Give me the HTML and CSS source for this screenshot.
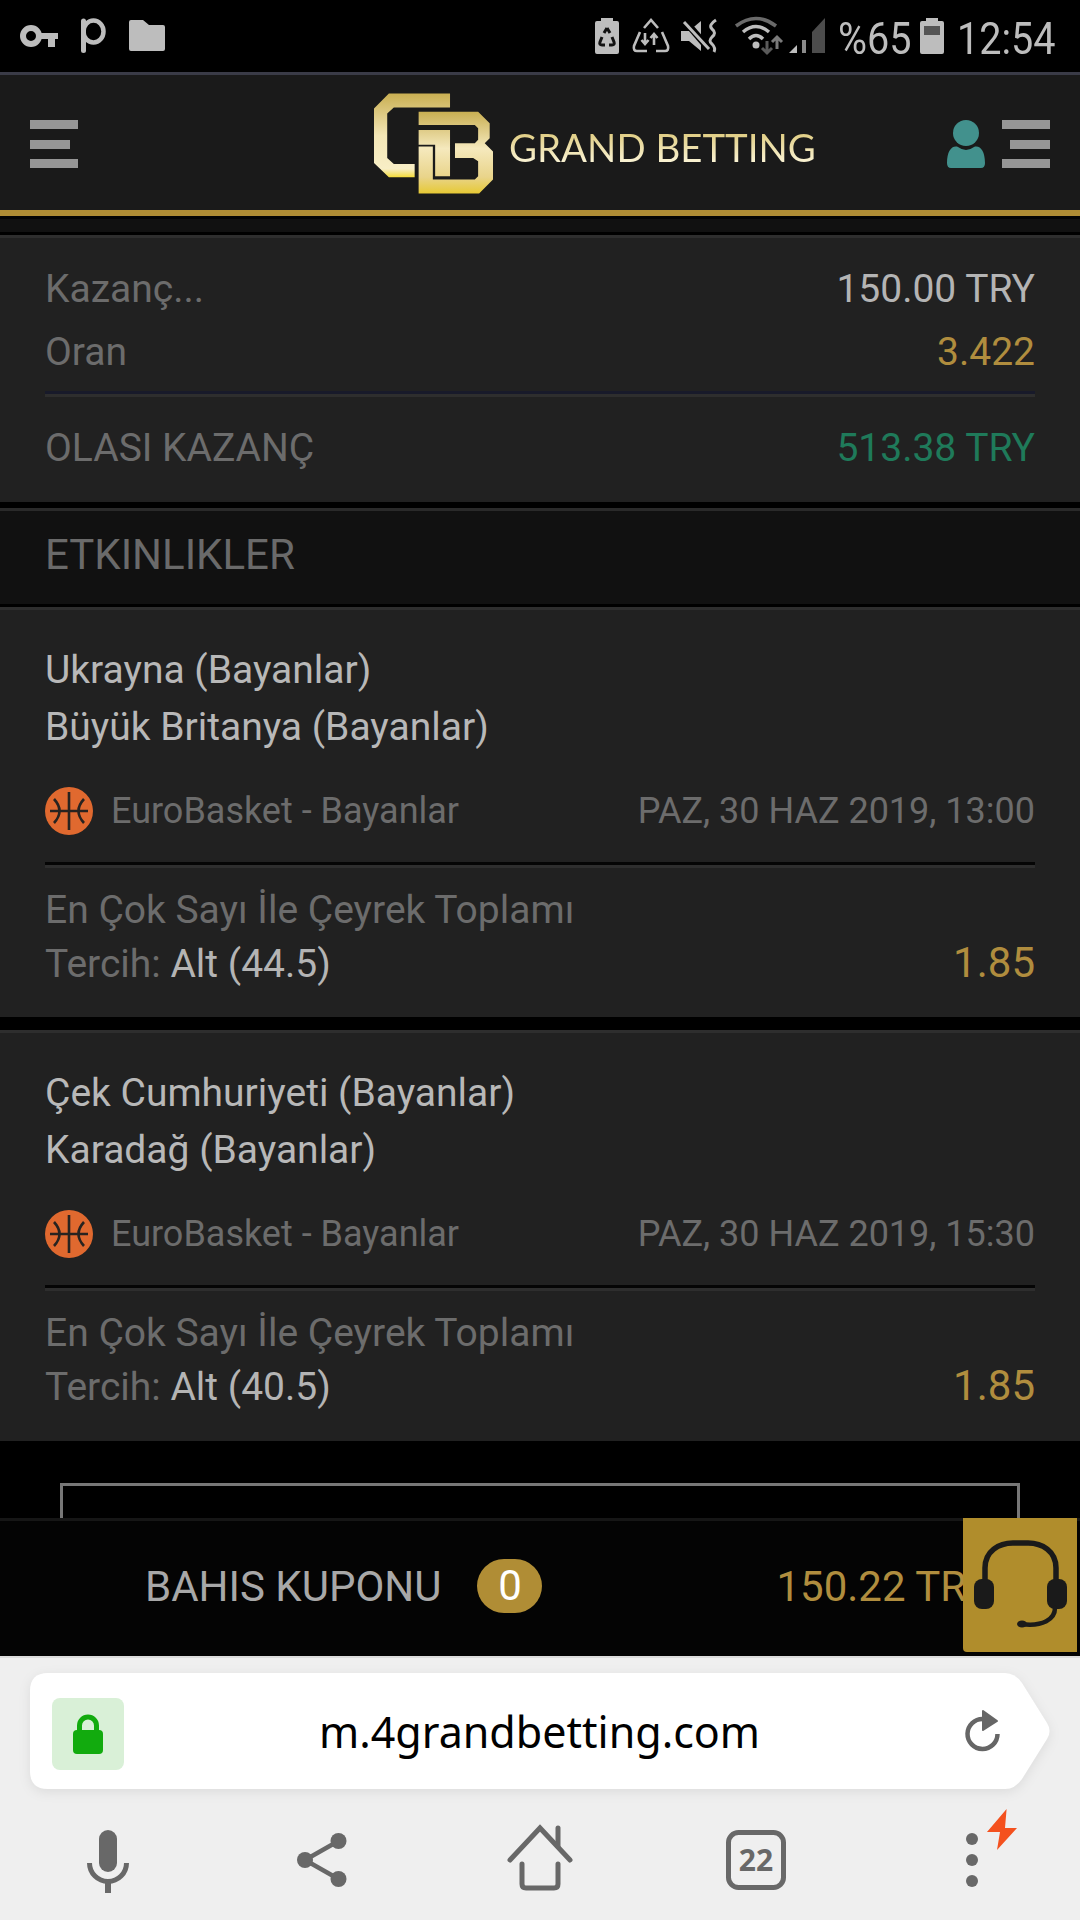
FILE: index.html
```html
<!DOCTYPE html>
<html lang="tr">
<head>
    <meta charset="UTF-8">
    <meta name="viewport" content="width=device-width, initial-scale=1.0">
    <title>Grand Betting</title>
    <link rel="stylesheet" href="styles.css">
</head>
<body>

    <!-- Phone status bar -->
    <div class="status-bar">
        <div class="status-group">
            <svg class="ic-key" viewBox="0 0 38 22"><circle cx="11" cy="11" r="8" fill="none" stroke="#bdbdbd" stroke-width="6"/><path d="M18 8H38V14H35V22H28V14H18Z" fill="#bdbdbd"/></svg>
            <svg class="ic-p" viewBox="0 0 26 35"><path d="M3.5 3V32.5" stroke="#bdbdbd" stroke-width="5" stroke-linecap="round" fill="none"/><ellipse cx="13.5" cy="13.5" rx="10" ry="11" fill="none" stroke="#bdbdbd" stroke-width="4.5"/></svg>
            <svg class="ic-folder" viewBox="0 0 36 31"><path d="M0 2Q0 0 2 0H14L20 5H34Q36 5 36 7V29Q36 31 34 31H2Q0 31 0 29Z" fill="#bdbdbd"/></svg>
        </div>
        <div class="status-group">
            <svg class="ic-batsave" viewBox="0 0 24 36"><path d="M6 0H18V3H22Q24 3 24 5V34Q24 36 22 36H2Q0 36 0 34V5Q0 3 2 3H6Z" fill="#bdbdbd"/><path d="M12 10L9 15M12 10L15 15M7 19L5 24Q4 27 7 27H10M17 19L19 24Q20 27 17 27H14" fill="none" stroke="#111" stroke-width="3"/></svg>
            <svg class="ic-recycle" viewBox="0 0 38 34" fill="none" stroke="#bdbdbd" stroke-width="2.6"><path d="M12 9L19 1L26 9"/><path d="M30 13L36 27Q37 32 33 32H24"/><path d="M8 13L2 27Q1 32 5 32H15"/><path d="M13 14V25M9.5 21L13 25L16.5 21"/><path d="M22 26V15M18.5 19L22 15L25.5 19"/></svg>
            <svg class="ic-mute" viewBox="0 0 38 34"><path d="M0 12H8L20 2V32L8 22H0Z" fill="#bdbdbd"/><path d="M3 1L28 30" stroke="#000" stroke-width="7"/><path d="M3 3L28 30" stroke="#bdbdbd" stroke-width="3"/><path d="M35 1Q27 6 31 10Q36 14 31 18Q27 22 31 25Q35 29 33 33" fill="none" stroke="#bdbdbd" stroke-width="3"/></svg>
            <svg class="ic-wifi" viewBox="0 0 48 38" fill="none"><path d="M1 9Q21 -6 41 9" stroke="#6a6a6a" stroke-width="3.5"/><path d="M8 15Q21 4 34 15" stroke="#bdbdbd" stroke-width="3.5"/><path d="M14 22Q21 15 28 22" stroke="#bdbdbd" stroke-width="3.5"/><circle cx="21" cy="28" r="3.5" fill="#bdbdbd"/><path d="M32 24V36M27 31L32 36L37 31" stroke="#5a5a5a" stroke-width="3"/><path d="M42 32V20M37 25L42 20L47 25" stroke="#7a7a7a" stroke-width="3"/></svg>
            <svg class="ic-signal" viewBox="0 0 36 36"><path d="M0 36L8 28V36Z" fill="#bdbdbd"/><path d="M13 23H17V36H13Z" fill="#8a8a8a"/><path d="M23 15L36 1V36H23Z" fill="#4c4c4c"/></svg>
            <span class="status-text status-pct">%65</span>
            <svg class="ic-battery" viewBox="0 0 24 36"><path d="M6 0H18V3H22Q24 3 24 5V34Q24 36 22 36H2Q0 36 0 34V5Q0 3 2 3H6Z" fill="#bdbdbd"/><rect x="4" y="8" width="16" height="9" fill="#555"/></svg>
            <span class="status-text status-time">12:54</span>
        </div>
    </div>

    <!-- Site header -->
    <header class="site-header">
        <div class="burger"><i></i><i class="short"></i><i></i></div>
        <div class="brand">
            <svg class="brand-logo" viewBox="70 40 360 302">
                <defs>
                    <linearGradient id="goldC" x1="0" y1="40" x2="0" y2="293" gradientUnits="userSpaceOnUse"><stop offset="0" stop-color="#c9af52"/><stop offset=".5" stop-color="#f3e6b6"/><stop offset=".9" stop-color="#f8eec6"/><stop offset="1" stop-color="#f5dc3a"/></linearGradient>
                    <linearGradient id="goldB" x1="0" y1="95" x2="0" y2="342" gradientUnits="userSpaceOnUse"><stop offset="0" stop-color="#c9af52"/><stop offset=".45" stop-color="#f5e9bd"/><stop offset=".8" stop-color="#e9d48a"/><stop offset="1" stop-color="#e6c935"/></linearGradient>
                </defs>
                <path fill="url(#goldC)" d="M115 40H300V82H130L110 100V235L130 253H193V293H115L70 250V85Z"/>
                <path fill="url(#goldB)" d="M205 150H300V290H255V195H205Z"/>
                <path fill="url(#goldB)" d="M205 95H385L420 130V175L405 190L430 215V300L388 342H205V200H248V300H375L385 290V245L370 235H315V190H375L385 180V145L375 135H205Z"/>
            </svg>
            <span class="brand-name">GRAND BETTING</span>
        </div>
        <div class="header-right">
            <svg class="ic-user" viewBox="0 0 38 48"><circle cx="19" cy="13" r="13" fill="#42918d"/><path d="M0 43C0 31 5 25 11 27Q19 33 27 27C33 25 38 31 38 43Q38 48 34 48H4Q0 48 0 43Z" fill="#42918d"/></svg>
            <div class="burger burger-right"><i></i><i class="short"></i><i></i></div>
        </div>
    </header>
    <div class="header-gold"></div>
    <div class="header-under"></div>

    <!-- Coupon summary -->
    <section class="card summary">
        <div class="row"><span class="label">Kazanç...</span><span class="value">150.00 TRY</span></div>
        <div class="row"><span class="label">Oran</span><span class="gold">3.422</span></div>
        <div class="divider divider-blue"></div>
        <div class="row"><span class="label">OLASI KAZANÇ</span><span class="green">513.38 TRY</span></div>
    </section>

    <div class="section-title">ETKINLIKLER</div>

    <section class="card event">
        <div class="teams">Ukrayna (Bayanlar)<br>Büyük Britanya (Bayanlar)</div>
        <div class="league-row">
            <svg class="ic-ball" viewBox="0 0 48 48"><circle cx="24" cy="24" r="24" fill="#e0692f"/><path d="M24 5V43M5 24H43M9 12Q20 24 9 36M39 12Q28 24 39 36" fill="none" stroke="#272320" stroke-width="2.6"/></svg>
            <span class="league">EuroBasket - Bayanlar</span>
            <span class="date">PAZ, 30 HAZ 2019, 13:00</span>
        </div>
        <div class="divider"></div>
        <div class="market">En Çok Sayı İle Çeyrek Toplamı</div>
        <div class="row pick"><span class="label">Tercih: <b>Alt (44.5)</b></span><span class="odds">1.85</span></div>
    </section>

    <section class="card event event-next">
        <div class="teams">Çek Cumhuriyeti (Bayanlar)<br>Karadağ (Bayanlar)</div>
        <div class="league-row">
            <svg class="ic-ball" viewBox="0 0 48 48"><circle cx="24" cy="24" r="24" fill="#e0692f"/><path d="M24 5V43M5 24H43M9 12Q20 24 9 36M39 12Q28 24 39 36" fill="none" stroke="#272320" stroke-width="2.6"/></svg>
            <span class="league">EuroBasket - Bayanlar</span>
            <span class="date">PAZ, 30 HAZ 2019, 15:30</span>
        </div>
        <div class="divider"></div>
        <div class="market">En Çok Sayı İle Çeyrek Toplamı</div>
        <div class="row pick"><span class="label">Tercih: <b>Alt (40.5)</b></span><span class="odds">1.85</span></div>
    </section>

    <div class="outline-box"></div>

    <!-- Sticky coupon footer -->
    <footer class="coupon-bar">
        <span class="coupon-title">BAHIS KUPONU</span>
        <span class="coupon-badge">0</span>
        <span class="coupon-amount">150.22 TRY</span>
        <div class="support">
            <svg viewBox="0 0 114 134" fill="none" stroke="#1a1a1a"><path d="M22 64V50C22 33 36 25 50 25H65C79 25 93 33 93 50V64" stroke-width="5.5"/><rect x="11" y="61" width="20" height="30" rx="8" fill="#1a1a1a" stroke="none"/><rect x="84" y="61" width="20" height="30" rx="8" fill="#1a1a1a" stroke="none"/><path d="M92 90C92 101 80 109 58 106" stroke-width="4.5" stroke-linecap="round"/><ellipse cx="59" cy="106" rx="5" ry="3.5" fill="#1a1a1a" stroke="none"/></svg>
        </div>
    </footer>

    <!-- Browser toolbar -->
    <div class="browser">
        <div class="url-bar">
            <svg class="url-shape" viewBox="0 0 1020 116"><path d="M18 0H975Q985 0 992 10L1017 50Q1022 58 1017 66L992 106Q985 116 975 116H18Q0 116 0 98V18Q0 0 18 0Z" fill="#fff"/></svg>
            <div class="lock-box">
                <svg viewBox="0 0 30 39"><path d="M6.5 17V10.5a8.5 8.5 0 0 1 17 0V17" fill="none" stroke="#12ab0e" stroke-width="5"/><rect y="15" width="30" height="24" rx="4" fill="#12ab0e"/></svg>
            </div>
            <span class="url-text">m.4grandbetting.com</span>
            <svg class="ic-reload" viewBox="0 0 36 42"><path d="M32.5 24A15 15 0 1 1 18 9" fill="none" stroke="#666" stroke-width="4.5"/><path d="M18 1L32 11L18 20Z" fill="#666" stroke="#666" stroke-width="2" stroke-linejoin="round"/></svg>
        </div>
        <div class="browser-nav">
            <div class="nav-cell"><svg viewBox="0 0 72 90" fill="none" stroke="#686868"><rect x="27" y="21" width="18" height="42" rx="9" fill="#686868" stroke="none"/><path d="M17.5 54a18.5 18.5 0 0 0 37 0" stroke-width="5"/><path d="M36 73V84" stroke-width="6"/></svg></div>
            <div class="nav-cell"><svg viewBox="0 0 72 90" fill="#686868" stroke="#686868"><path d="M50.5 32L17 51L50.5 70" fill="none" stroke-width="4.5"/><circle cx="17" cy="51" r="8" stroke="none"/><circle cx="50.5" cy="32" r="8" stroke="none"/><circle cx="50.5" cy="70" r="8" stroke="none"/></svg></div>
            <div class="nav-cell"><svg viewBox="0 0 72 90" fill="none" stroke="#686868" stroke-width="5" stroke-linecap="round"><path d="M6 51L36 19L66 51"/><path d="M54 19V37"/><path d="M18 55V75Q18 79 22 79H50Q54 79 54 75V55"/></svg></div>
            <div class="nav-cell"><svg viewBox="0 0 72 90"><rect x="8.5" y="23.5" width="55" height="55" rx="10" fill="none" stroke="#686868" stroke-width="5"/><text class="tab-count" x="36" y="62" text-anchor="middle">22</text></svg></div>
            <div class="nav-cell"><svg viewBox="0 0 72 90" fill="#686868"><circle cx="36" cy="30" r="6"/><circle cx="36" cy="51" r="6"/><circle cx="36" cy="72" r="6"/><path d="M70.6 0L51 23H64L61 41L81 19H69Z" fill="#f4511e"/></svg></div>
        </div>
    </div>

</body>
</html>
```

FILE: styles.css
```css
* {
    box-sizing: border-box;
}
html, body {
    margin: 0;
    padding: 0;
}
body {
    width: 1080px;
    height: 1920px;
    overflow: hidden;
    background: #000;
    font-family: Roboto, "Liberation Sans", sans-serif;
    font-size: 39px;
    color: #b4b4b4;
}
svg {
    display: block;
    overflow: visible;
}

/* status bar */
.status-bar {
    height: 72px;
    background: #000;
    display: flex;
    justify-content: space-between;
    align-items: flex-start;
    padding: 17px 25px 0 20px;
}
.status-group {
    display: flex;
    align-items: flex-start;
}
.ic-key {
    width: 38px;
    height: 22px;
    margin-top: 8px;
}
.ic-p {
    width: 26px;
    height: 35px;
    margin-left: 22px;
    margin-top: 1px;
}
.ic-folder {
    width: 36px;
    height: 31px;
    margin-left: 23px;
    margin-top: 3px;
}
.ic-batsave {
    width: 24px;
    height: 36px;
    margin-top: 1px;
}
.ic-recycle {
    width: 38px;
    height: 34px;
    margin-left: 13px;
    margin-top: 2px;
}
.ic-mute {
    width: 38px;
    height: 34px;
    margin-left: 11px;
    margin-top: 2px;
}
.ic-wifi {
    width: 48px;
    height: 38px;
    margin-left: 16px;
}
.ic-signal {
    width: 36px;
    height: 36px;
    margin-left: 6px;
}
.ic-battery {
    width: 24px;
    height: 36px;
    margin-left: 13px;
    margin-top: 1px;
}
.status-text {
    font-size: 45px;
    line-height: 44px;
    color: #bdbdbd;
    display: inline-block;
    transform: scaleX(.88);
    transform-origin: left top;
    white-space: nowrap;
}
.status-pct {
    width: 69px;
    margin-left: 13px;
}
.status-time {
    width: 98px;
    margin-left: 13px;
}

/* header */
.site-header {
    height: 138px;
    background: #1a1a1a;
    border-top: 3px solid #3a3b47;
    display: flex;
    justify-content: space-between;
    padding: 45px 30px 0;
    position: relative;
}
.burger {
    width: 48px;
    height: 48px;
    display: flex;
    flex-direction: column;
    justify-content: space-between;
    align-items: flex-start;
}
.burger i {
    display: block;
    width: 48px;
    height: 9px;
    background: #969696;
}
.burger i.short {
    width: 40px;
}
.burger-right {
    align-items: flex-end;
}
.brand {
    position: absolute;
    left: 374px;
    top: 18px;
    display: flex;
}
.brand-logo {
    width: 119px;
    height: 101px;
}
.brand-name {
    margin-left: 16px;
    margin-top: 32px;
    font-family: Lato, sans-serif;
    font-size: 38.4px;
    line-height: 44px;
    white-space: nowrap;
    background: linear-gradient(#d8c26c, #fbf4d6 55%, #f6e9a8 85%, #f0d83c);
    -webkit-background-clip: text;
    background-clip: text;
    color: transparent;
}
.header-right {
    display: flex;
    gap: 17px;
}
.ic-user {
    width: 38px;
    height: 48px;
}
.header-gold {
    height: 6px;
    background: #b08d35;
}
.header-under {
    height: 19px;
    background: #111;
    border-top: 3px solid #050505;
    border-bottom: 3px solid #000;
}

/* cards */
.card {
    background: #212121;
    border-top: 3px solid #2e2e2e;
    padding: 0 45px;
}
.row {
    display: flex;
    justify-content: space-between;
    line-height: 63px;
}
.label {
    color: #6c6c6c;
}
.label b {
    font-weight: 400;
    color: #b4b4b4;
}
.gold {
    color: #b08d3e;
}
.green {
    color: #1f7a5a;
}
.summary {
    padding-top: 20px;
    padding-bottom: 22px;
}
.divider {
    height: 6px;
    border-top: 3px solid #050505;
    border-bottom: 3px solid #2e2e2e;
}
.divider-blue {
    margin-top: 7px;
    margin-bottom: 20px;
    border-top-color: #181a2a;
}
.section-title {
    margin-top: 6px;
    height: 96px;
    background: #111;
    border-top: 3px solid #2a2a2a;
    padding: 13px 45px 0;
    font-size: 42px;
    line-height: 62px;
    color: #6a6a6a;
}
.event {
    margin-top: 3px;
    padding-top: 32px;
    padding-bottom: 25px;
}
.event-next {
    margin-top: 13px;
    padding-bottom: 26px;
}
.teams {
    line-height: 57px;
    color: #b8b8b8;
}
.league-row {
    margin-top: 31px;
    display: flex;
    align-items: center;
    font-size: 36px;
    line-height: 48px;
    color: #6c6c6c;
}
.ic-ball {
    width: 48px;
    height: 48px;
}
.league {
    margin-left: 18px;
}
.date {
    margin-left: auto;
}
.event .divider {
    margin-top: 27px;
    margin-bottom: 15px;
}
.market {
    line-height: 55px;
    color: #6c6c6c;
}
.pick {
    line-height: 53px;
    padding-bottom: 1px;
}
.odds {
    font-size: 42px;
    line-height: 50px;
    color: #b08d3e;
}
.outline-box {
    margin: 42px 60px 0;
    height: 35px;
    border: 3px solid #777;
    border-bottom: 0;
}

/* coupon footer */
.coupon-bar {
    position: relative;
    height: 138px;
    background: #040404;
    border-top: 3px solid #161616;
    display: flex;
    align-items: center;
    padding-left: 145px;
    padding-bottom: 5px;
    font-size: 42px;
    white-space: nowrap;
}
.coupon-title {
    color: #a8a8a8;
}
.coupon-badge {
    width: 65px;
    height: 54px;
    margin-left: 36px;
    border-radius: 27px;
    background: #b08d35;
    color: #fff;
    text-align: center;
    line-height: 54px;
}
.coupon-amount {
    margin-left: 234px;
    color: #b08d3e;
}
.support {
    position: absolute;
    top: -3px;
    right: 3px;
    width: 114px;
    height: 134px;
    background: #b08d2c;
    border-bottom-left-radius: 4px;
}
.support svg {
    width: 114px;
    height: 134px;
}

/* browser toolbar */
.browser {
    height: 264px;
    background: #efefef;
    border-top: 2px solid #ddd;
    padding-top: 15px;
}
.url-bar {
    position: relative;
    width: 1020px;
    height: 116px;
    margin-left: 30px;
    display: flex;
    align-items: center;
    padding-left: 22px;
}
.url-shape {
    position: absolute;
    left: 0;
    top: 0;
    width: 1020px;
    height: 116px;
    filter: drop-shadow(0 3px 6px rgba(0, 0, 0, .08));
}
.lock-box {
    position: relative;
    width: 72px;
    height: 72px;
    margin-top: 6px;
    background: #d9f0d7;
    border-radius: 8px;
    display: flex;
    align-items: center;
    justify-content: center;
}
.lock-box svg {
    width: 30px;
    height: 39px;
}
.url-text {
    position: relative;
    margin-left: 195px;
    font-family: "Noto Sans", sans-serif;
    font-size: 43px;
    color: #000;
    white-space: nowrap;
}
.ic-reload {
    position: absolute;
    left: 935px;
    top: 37px;
    width: 36px;
    height: 42px;
}
.browser-nav {
    display: flex;
    margin-top: 20px;
}
.nav-cell {
    width: 216px;
    display: flex;
    justify-content: center;
}
.nav-cell svg {
    width: 72px;
    height: 90px;
}
.tab-count {
    font-family: "Noto Sans", sans-serif;
    font-weight: 700;
    font-size: 30px;
    fill: #686868;
}
```
